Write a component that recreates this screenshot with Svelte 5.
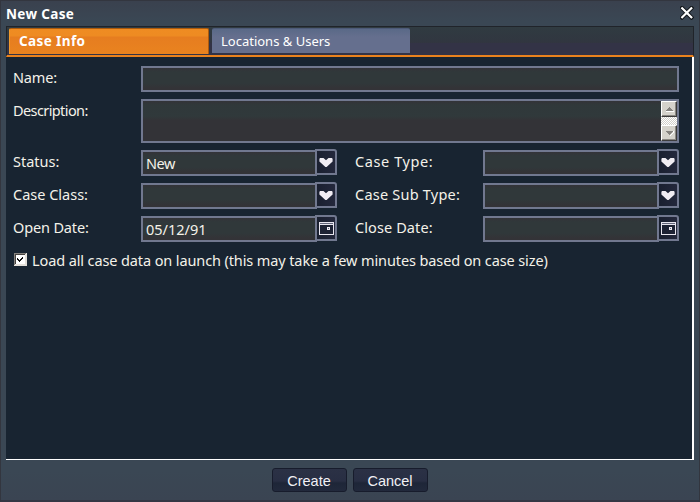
<script>
  const rows = [
    { left: 'Status:', value: 'New', right: 'Case Type:', icon: 'arrow', ls: 0, rs: 0.6, vs: -0.5 },
    { left: 'Case Class:', value: '', right: 'Case Sub Type:', icon: 'arrow', ls: 0, rs: 0.22, vs: 0 },
    { left: 'Open Date:', value: '05/12/91', right: 'Close Date:', icon: 'date', ls: -0.15, rs: 0.1, vs: 0 }
  ];
</script>

{#snippet picker(value, icon, spacing)}
  <div class="picker">
    <div class="box" style="letter-spacing: {spacing}px">{value}</div>
    <div class="trigger">
      {#if icon === 'arrow'}
        <svg width="14" height="9" viewBox="0 0 14 9">
          <path d="M1 0h3.5l2.5 2.3l2.5-2.3h3.5l.6 1v2.4l-6 5.6h-1.2l-6-5.6v-2.4z" fill="#f1edf3" />
        </svg>
      {:else}
        <svg width="15" height="13" viewBox="0 0 15 13" shape-rendering="crispEdges">
          <path d="M0 0h15v13h-15z" fill="#e8e6ef" />
          <path d="M1 1h13v1h-13z" fill="#62667a" />
          <path d="M1 3h13v9h-13z" fill="#1d2234" />
          <path d="M8 5h3v3h-3z" fill="#f1edf3" />
          <path d="M9 6h1v1h-1z" fill="#5b6c86" />
        </svg>
      {/if}
    </div>
  </div>
{/snippet}

<div class="window">
  <header>
    <span class="title">New Case</span>
    <svg class="close" width="14" height="14" viewBox="0 0 14 14">
      <path d="M2 2l9.5 9.5M11.5 2l-9.5 9.5" stroke="#101418" stroke-width="4" stroke-linecap="square" />
      <path d="M2.2 2.2l9.1 9.1M11.3 2.2l-9.1 9.1" stroke="#fff" stroke-width="2.2" stroke-linecap="square" />
    </svg>
  </header>
  <nav>
    <div class="tab active"><span>Case Info</span></div>
    <div class="tab"><span>Locations &amp; Users</span></div>
  </nav>
  <main>
    <div class="row name"><span class="label" style="letter-spacing: -0.15px">Name:</span><div class="box wide"></div></div>
    <div class="row desc">
      <span class="label" style="letter-spacing: -0.6px">Description:</span>
      <div class="box wide area">
        <div class="scroll">
          <div class="arrow"><svg width="9" height="6" viewBox="0 0 9 6" shape-rendering="crispEdges"><path d="M1 5h8v1h-8z" fill="#fff" /><path d="M4 1h1v1h1v1h1v1h1v1h-7v-1h1v-1h1v-1h1z" fill="#85827e" /></svg></div>
          <div class="track"></div>
          <div class="arrow"><svg width="9" height="6" viewBox="0 0 9 6" shape-rendering="crispEdges"><path d="M4 6l4-4v-1h1v1l-4 4z" fill="#fff" /><path d="M1 1h7v1h-1v1h-1v1h-1v1h-1v-1h-1v-1h-1v-1h-1z" fill="#85827e" /></svg></div>
        </div>
      </div>
    </div>
    {#each rows as r}
      <div class="row">
        <span class="label" style="letter-spacing: {r.ls}px">{r.left}</span>
        {@render picker(r.value, r.icon, r.vs)}
        <span class="label second" style="letter-spacing: {r.rs}px">{r.right}</span>
        {@render picker('', r.icon, 0)}
      </div>
    {/each}
    <div class="check">
      <svg width="13" height="13" viewBox="0 0 13 13" shape-rendering="crispEdges">
        <path d="M0 0h13v13h-13z" fill="#e4e0da" />
        <path d="M0 0h12v1h-11v11h-1z" fill="#85827e" />
        <path d="M1 1h10v1h-9v9h-1z" fill="#45423f" />
        <path d="M2 2h9v9h-9z" fill="#fff" />
        <path d="M3 5h1v1h1v1h1v-1h1v-1h1v-1h1v2h-1v1h-1v1h-1v1h-1v-1h-1v-1h-1z" fill="#111" />
      </svg>
      <span>Load all case data on launch (this may take a few minutes based on case size)</span>
    </div>
  </main>
  <footer><button>Create</button><button>Cancel</button></footer>
</div>

<style>
  :global(body) { margin: 0; overflow: hidden; }
  * { box-sizing: border-box; }
  .window {
    width: 700px; height: 502px; padding: 0 5px 0 5px;
    border: 1px solid #33363f; border-bottom: 2px solid #343644;
    background: linear-gradient(#3a414e, #3a4754 20px, #3a4754 470px, #3a4452);
    font: 14.5px/20px "Noto Sans", sans-serif; color: #f4f2e9;
    display: flex; flex-direction: column; white-space: nowrap;
  }
  header { height: 25px; display: flex; justify-content: space-between; flex: none; }
  .title { color: #fff; font-size: 13.5px; font-weight: 700; line-height: 26px; letter-spacing: 0.35px; }
  .close { margin: 5px 0 0; }
  nav {
    height: 31px; flex: none; display: flex; gap: 3px; padding: 1px 2px 0;
    border: 1px solid #20242a; border-bottom: 2px solid #ea821d;
    background: linear-gradient(#303b41, #313640 55%, #333346 58%, #333346);
  }
  .tab {
    width: 198px; height: 25px; padding-left: 9px; color: #fff; font-size: 13px; line-height: 24px;
    border-radius: 2px 2px 0 0; background: linear-gradient(#596987, #656f8e 8px);
    border-top: 1px solid #4d5a78;
  }
  .tab.active {
    width: 200px; height: 26px; font-size: 13.5px; letter-spacing: 0.4px; font-weight: 700;
    border: 1px solid #ad5a0c; border-left-color: #f39a2c; border-bottom: 0;
    background: linear-gradient(#ef8c22, #ee8b22 7px, #e67d20 8px, #e9831f);
  }
  main {
    height: 403px; flex: none; padding: 9px 13px 0 7px; background: #182431;
    border-right: 2px solid #fff; border-bottom: 1px solid #fff;
  }
  .row { display: flex; height: 26px; margin-bottom: 7px; }
  .row.desc { height: 44px; }
  .label { width: 128px; flex: none; line-height: 22px; }
  .label.second { margin-left: 18px; }
  .box {
    width: 176px; height: 26px; flex: none; border: 2px solid #71788f; padding-left: 3px; line-height: 22px;
    background: linear-gradient(#333338, #30383a 4px, #30383a 15px, #333337 20px);
  }
  .box.wide { width: 538px; }
  .area { height: 44px; padding: 0; display: flex; justify-content: flex-end; background: linear-gradient(#333338, #30383a 4px, #30393b 15px, #333337 19px); }
  .picker { display: flex; width: 196px; flex: none; }
  .trigger {
    width: 22px; height: 26px; margin: -1px 0 0 -2px; flex: none; position: relative;
    border: 2px solid #71788f; border-radius: 0 3px 0 0; background: linear-gradient(90deg, #1a2030, #24283c);
    display: flex; align-items: center; justify-content: center;
  }
  .trigger svg { flex: none; }
  .scroll { width: 16px; height: 40px; }
  .arrow {
    width: 16px; height: 16px; background: #d5d2cb; border: 1px solid #fff; border-right: 1px solid #3d3c3c; border-bottom: 1px solid #3d3c3c;
    box-shadow: inset -1px -1px #8a8782; display: flex; align-items: center; justify-content: center;
  }
  .track { height: 8px; background: repeating-conic-gradient(#d2cfca 0 25%, #fff 0 50%) 0 0 / 2px 2px; }
  .check { display: flex; margin-top: -1px; padding-left: 1px; }
  .check svg { margin: 5px 5px 0 0; flex: none; }
  .check span { line-height: 25px; letter-spacing: -0.112px; }
  footer { display: flex; justify-content: center; gap: 6px; padding-top: 8px; margin-right: 1px; }
  button {
    width: 75px; height: 24px; padding: 1px 0 0; border: 1px solid #171c2c; border-radius: 3px; color: #f1f1f5;
    font: 14.5px/20px "Liberation Sans", Arial, sans-serif;
    background: linear-gradient(#2b3145, #282e43 12px, #1e2638 14px, #22293c);
  }
</style>
